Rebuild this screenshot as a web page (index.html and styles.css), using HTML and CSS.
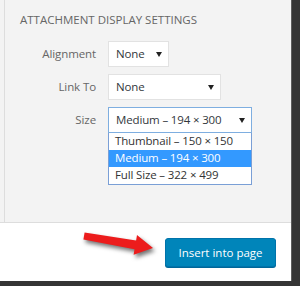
FILE: index.html
```html
<!DOCTYPE html>
<html lang="en">
<head>
    <meta charset="UTF-8">
    <title>Attachment Display Settings</title>
    <link rel="stylesheet" href="styles.css">
</head>
<body>
    <div class="frame">
        <div class="sidebar-wrap">
            <div class="sidebar">
                <h2 class="title">Attachment Display Settings</h2>

                <div class="setting">
                    <span class="label">Alignment</span>
                    <div class="select select-small">None<span class="caret"></span></div>
                </div>

                <div class="setting">
                    <span class="label">Link To</span>
                    <div class="select select-medium">None<span class="caret"></span></div>
                </div>

                <div class="setting">
                    <span class="label">Size</span>
                    <div class="select-group">
                        <div class="select select-large focused">Medium &ndash; 194 &times; 300<span class="caret"></span></div>
                        <ul class="options">
                            <li>Thumbnail &ndash; 150 &times; 150</li>
                            <li class="selected">Medium &ndash; 194 &times; 300</li>
                            <li>Full Size &ndash; 322 &times; 499</li>
                        </ul>
                    </div>
                </div>
            </div>
        </div>

        <div class="toolbar">
            <button class="insert-btn">Insert into page</button>
        </div>

        <!-- annotation arrow pointing at the button -->
        <svg class="pointer" width="291" height="281" viewBox="0 0 291 281">
            <polygon points="84.6,232.5 136.1,240.5 137,235 153,248 133.6,254.8 134.5,249.3 83.4,239.5" fill="#ec1c1c"/>
        </svg>
    </div>
</body>
</html>
```

FILE: styles.css
```css
* {
    margin: 0;
    padding: 0;
    box-sizing: border-box;
}

body {
    background: #353535;
    font-family: 'Open Sans', 'Noto Sans', sans-serif;
    width: 300px;
    height: 286px;
    overflow: hidden;
}

.frame {
    position: relative;
    width: 291px;
    height: 281px;
    display: flex;
    flex-direction: column;
    box-shadow: 1px 0 0 #5e5e5e;
}

.sidebar-wrap {
    height: 223px;
    background: #f3f3f3;
    padding-left: 4px;
    border-bottom: 1px solid #dddddd;
}

.sidebar {
    height: 100%;
    border-left: 1px solid #dddddd;
    padding: 12px 0 0 15px;
}

.title {
    font-size: 11.5px;
    font-weight: 400;
    text-transform: uppercase;
    color: #666;
    margin-bottom: 14px;
}

.setting {
    display: flex;
    align-items: flex-start;
    gap: 12px;
    margin-bottom: 7px;
}

.label {
    width: 76px;
    text-align: right;
    font-size: 11.5px;
    letter-spacing: -0.1px;
    color: #666;
    line-height: 26px;
}

.select {
    position: relative;
    height: 26px;
    line-height: 24px;
    padding-left: 7px;
    background: #fff;
    border: 1px solid #e2e2e2;
    font-size: 11.5px;
    letter-spacing: -0.15px;
    color: #32373c;
}

.select-small {
    width: 61px;
}

.select-medium {
    width: 113px;
}

.select-large {
    width: 144px;
}

.select.focused {
    border-color: #7eaee0;
}

.caret {
    position: absolute;
    right: 6px;
    top: 10px;
    border-left: 3.5px solid transparent;
    border-right: 3.5px solid transparent;
    border-top: 5px solid #222;
}

.options {
    list-style: none;
    width: 144px;
    background: #fff;
    border: 1px solid #7a9fd6;
    border-top: none;
}

.options li {
    height: 17px;
    line-height: 16px;
    padding-left: 6px;
    font-size: 11.5px;
    letter-spacing: -0.15px;
    color: #333;
}

.options li.selected {
    background: #3399ff;
    color: #fff;
}

.toolbar {
    flex: 1;
    background: #fff;
    display: flex;
    align-items: center;
    justify-content: flex-end;
    padding-right: 15px;
}

.insert-btn {
    width: 111px;
    height: 29px;
    background: #0085ba;
    border: 1px solid #0073aa;
    border-radius: 3px;
    box-shadow: 0 1px 0 #006799;
    color: #fff;
    font-family: inherit;
    font-size: 11.5px;
}

.pointer {
    position: absolute;
    left: 0;
    top: 0;
    filter: drop-shadow(2px 3px 2px rgba(0,0,0,0.55));
}
```
